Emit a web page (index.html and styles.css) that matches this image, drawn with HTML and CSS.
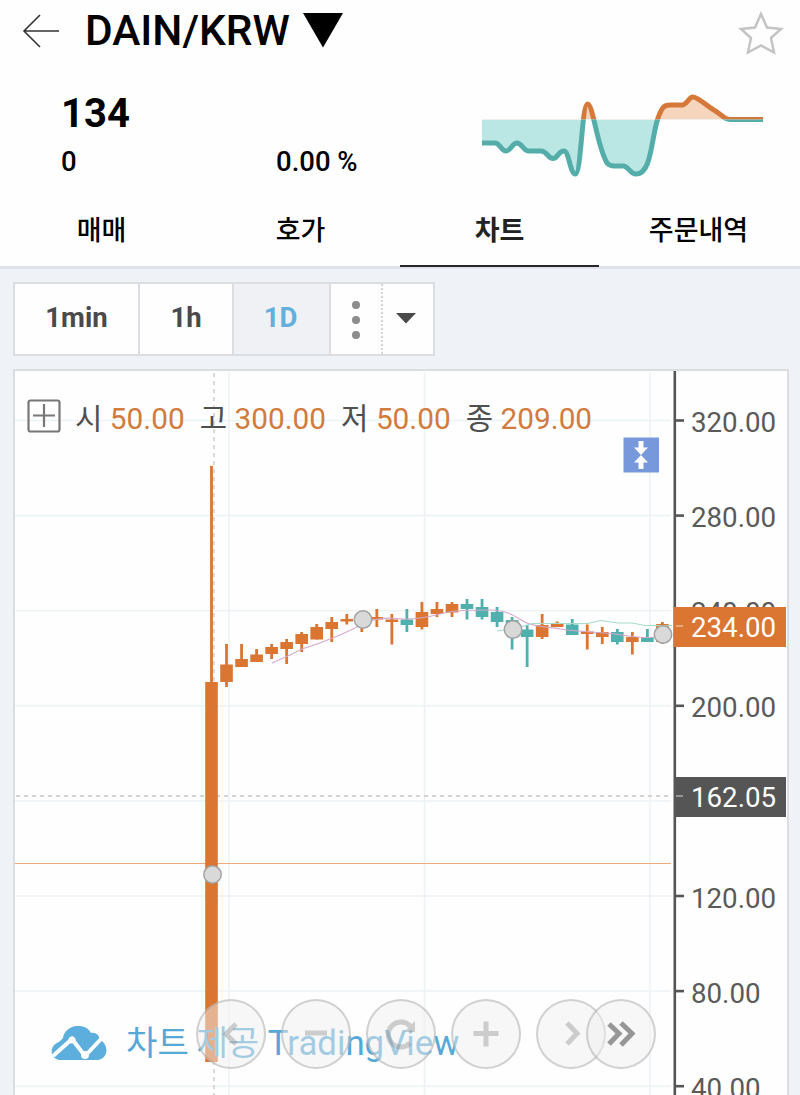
FILE: index.html
```html
<!DOCTYPE html>
<html lang="ko">
<head>
    <meta charset="UTF-8">
    <meta name="viewport" content="width=device-width, initial-scale=1.0">
    <title>DAIN/KRW</title>
    <link rel="stylesheet" href="styles.css">
</head>
<body>
    <header class="top">
        <div class="title-bar">
            <svg class="back" width="38" height="36" viewBox="0 0 38 36"><path d="M18 2L2 18L18 34M2 18H37"/></svg>
            <h1>DAIN/KRW</h1>
            <svg class="caret" width="40" height="35" viewBox="0 0 40 35"><path d="M0 0H40L20 34.5Z"/></svg>
            <svg class="star" width="46" height="44" viewBox="0 0 46 44"><path d="M23 3L29 16.5L43 18L33 27L36 41.5L23 34.5L10 41.5L13 27L3 18L17 16.5Z"/></svg>
        </div>
        <div class="summary">
            <div class="quote">
                <div class="price">134</div>
                <div class="change">
                    <span class="diff">0</span>
                    <span>0.00 %</span>
                </div>
            </div>
            <svg class="spark" width="282" height="90" viewBox="482 90 282 90">
                <defs>
                    <clipPath id="up"><rect x="482" y="90" width="282" height="29.5"/></clipPath>
                    <clipPath id="down"><rect x="482" y="119.5" width="282" height="61"/></clipPath>
                    <path id="line" d="M482 143H495C500 143 501 151 506 151S512 143 517 143S523 151 529 151H541C547 151 548 158.5 553 158.5S558 151 564 151C569 151 570 174 575.5 174C581 174 582 104 587.5 104C593 104 597 146 607 163C609 165 612 166 614 166H624C629 167 630 174 636 174C652 174 651 138 658 118C662 107 664 105 670 105H683C688 103 689 97 693 97C698 97 705 105 717 112L725 118C727 119 728 119.5 730 119.5H763"/>
                    <path id="area" d="M482 119.500V143H495C500 143 501 151 506 151S512 143 517 143S523 151 529 151H541C547 151 548 158.500 553 158.500S558 151 564 151C569 151 570 174 575.500 174C581 174 582 104 587.500 104C593 104 597 146 607 163C609 165 612 166 614 166H624C629 167 630 174 636 174C652 174 651 138 658 118C662 107 664 105 670 105H683C688 103 689 97 693 97C698 97 705 105 717 112L725 118C727 119 728 119.500 730 119.500Z"/>
                </defs>
                <g class="spark-up" clip-path="url(#up)"><use href="#area"/><use class="stroke" href="#line"/></g>
                <g class="spark-down" clip-path="url(#down)"><use href="#area"/><use class="stroke" href="#line"/></g>
            </svg>
        </div>
        <nav class="tabs">
            <a>매매</a>
            <a>호가</a>
            <a class="active">차트</a>
            <a>주문내역</a>
        </nav>
    </header>

    <main>
        <div class="toolbar">
            <button class="min">1min</button>
            <button class="hour">1h</button>
            <button class="day selected">1D</button>
            <button class="more"><i></i><i></i><i></i></button>
            <button class="drop"><svg width="20" height="11" viewBox="0 0 20 11"><path d="M0 0H20L10 10.500Z"/></svg></button>
        </div>

        <section class="chart">
            <svg id="plot" width="772" height="724" viewBox="15 371 772 724">
                <g id="grid"></g>
                <path class="cross" d="M214 373V1095M16 796H671"/>
                <rect class="last" x="15" y="863" width="656" height="1"/>
                <g id="candles"></g>
                <path class="ma" d="M272 663L290 655L302 649L320 643L340 635L353 629C370 620 380 617 395 618.500S425 618 440 614S470 610 490 610S518 619 527 623S550 627 560 629S600 632 615 634S645 639 655 637"/>
                <path class="ma2" d="M497 631L514 629L532 623.500H588L601 620.500L618 623H632L645 625.500H672"/>
                <g class="marks">
                    <circle cx="212.500" cy="874.500" r="8.700"/>
                    <circle cx="363" cy="619.500" r="8.700"/>
                    <circle cx="513" cy="629.500" r="8.700"/>
                    <circle cx="663" cy="634.500" r="8.700"/>
                </g>
                <rect class="axis-bg" x="674" y="371" width="113" height="724"/>
                <path class="axis" d="M674.800 371V1095"/>
                <g id="axis"></g>
                <rect class="tag-now" x="673.500" y="607" width="112.500" height="40"/>
                <path class="tag-tick" d="M676 626H683"/>
                <text class="tag" x="691" y="637">234.00</text>
                <rect class="tag-cross" x="674" y="777" width="112" height="40"/>
                <path class="tag-tick" d="M676 796H683"/>
                <text class="tag" x="691" y="807">162.05</text>
                <g class="fit">
                    <rect x="623.500" y="437.500" width="35.500" height="35"/>
                    <path d="M638.500 441H643.500V447.500H648L641 455L634 447.500H638.500ZM638.500 469H643.500V462.500H648L641 455L634 462.500H638.500Z"/>
                </g>
            </svg>

            <div class="legend">
                <svg width="34" height="34" viewBox="0 0 34 34"><rect x="1.500" y="1.500" width="31" height="31" rx="2"/><path d="M17 5V28M6 16.500H28"/></svg>
                <span>시 <b>50.00</b></span>
                <span>고 <b>300.00</b></span>
                <span>저 <b>50.00</b></span>
                <span>종 <b>209.00</b></span>
            </div>

            <div class="credit">
                <svg width="56" height="35" viewBox="0 0 56 35">
                    <path class="cloud" d="M10 34C-1 34-3 20 8 16C10 14 11 13 12 12C14 -2 35 -4 40 7C45 6 48 9 49 14C58 18 58 33 46 34Z"/>
                    <path class="zig" d="M2 30L21 13L34 30L50 13"/>
                    <circle cx="21" cy="14" r="3.500"/><circle cx="34" cy="29" r="4"/>
                </svg>
                <span>차트 제공 <em>TradingView</em></span>
            </div>

            <div class="controls">
                <button class="prev"><svg viewBox="0 0 70 70"><path d="M40 25L30 35L40 45"/></svg></button>
                <button class="out"><svg viewBox="0 0 70 70"><path d="M24 34H46"/></svg></button>
                <button class="reset"><svg viewBox="0 0 70 70"><path d="M44 27A12.500 12.500 0 1 0 44 44"/><path class="solid" d="M49 22V33H38Z"/></svg></button>
                <button class="in"><svg viewBox="0 0 70 70"><path d="M35 22.500V47.500M22.500 34.500H47.500"/></svg></button>
                <button class="next"><svg viewBox="0 0 70 70"><path d="M31 24L41 34.500L31 45"/></svg></button>
                <button class="end"><svg viewBox="0 0 70 70"><path d="M23 25L33 34.500L23 45M35 24L46 34.500L35 46"/></svg></button>
            </div>
        </section>
    </main>

    <script src="chart.js"></script>
</body>
</html>
```
FILE: styles.css
```css
* {
    box-sizing: border-box;
}

body {
    margin: 0;
    height: 1095px;
    overflow: hidden;
    background: #eff2f7;
    color: #000;
    font-family: Roboto, "Noto Sans CJK KR", sans-serif;
}

svg {
    display: block;
    flex: none;
}

button {
    margin: 0;
    padding: 0;
    border: none;
    background: none;
    font-family: inherit;
}

.top {
    height: 269px;
    background: #fefefe;
    border-bottom: 3px solid #e0e4ea;
}

.title-bar {
    display: flex;
    height: 82px;
    padding: 13px 16px 0 22px;
}

.back {
    fill: none;
    stroke: #333;
    stroke-width: 1.6;
}

h1 {
    margin: -7px 0 0 25px;
    width: 218px;
    font-size: 42.4px;
    line-height: 49px;
    font-weight: 500;
    white-space: nowrap;
}

.star {
    margin: -2px 0 0 auto;
    fill: none;
    stroke: #c4c4c4;
    stroke-width: 2.5;
}

.summary {
    display: flex;
    height: 112px;
    padding: 8px 36px 0 61px;
    justify-content: space-between;
}

.price {
    padding-top: 1px;
    font-size: 40px;
    line-height: 46px;
    font-weight: 700;
}

.change {
    display: flex;
    margin-top: 8px;
    font-size: 27.5px;
    line-height: 34px;
    font-weight: 500;
}

.diff {
    width: 215px;
}

.spark-up {
    fill: #f6d5bd;
}

.spark-down {
    fill: #bae6e3;
}

.stroke {
    fill: none;
    stroke-width: 5;
}

.spark-up .stroke {
    stroke: #d6783a;
}

.spark-down .stroke {
    stroke: #55adaa;
}

.tabs {
    display: flex;
    height: 73px;
    padding: 0 2px;
}

.tabs a {
    width: 199px;
    padding-top: 17px;
    font-size: 27px;
    line-height: 40px;
    font-weight: 500;
    text-align: center;
}

.tabs .active {
    color: #222;
    border-bottom: 2px solid #26262c;
    font-weight: 700;
}

main {
    padding: 13px 12px 0 13px;
}

.toolbar {
    display: flex;
    width: 422px;
    height: 74px;
    border: 2px solid #dbdde0;
    background: #fefefe;
}

.toolbar button {
    display: flex;
    align-items: center;
    justify-content: center;
    padding-bottom: 4px;
    border-right: 2px solid #dbdde0;
    color: #4a4a4a;
    font-size: 27.5px;
    font-weight: 700;
}

.min {
    width: 125px;
}

.hour {
    width: 94px;
}

.day {
    width: 97px;
}

.toolbar .selected {
    padding-right: 2px;
    background: #f0f1f4;
    color: #64b0dc;
}

.toolbar .more {
    width: 52px;
    padding: 2px 0 0;
    flex-direction: column;
    gap: 7px;
    border-right: 2px dotted #d5d5d5;
}

.more i {
    width: 8px;
    height: 8px;
    border-radius: 50%;
    background: #8c8c8c;
}

.toolbar .drop {
    width: 50px;
    padding: 0 5px 1px 0;
    border: none;
    fill: #4a4a4a;
}

.chart {
    position: relative;
    width: 776px;
    height: 740px;
    margin-top: 13px;
    border: 2px solid #dbdde0;
    background: #fefefe;
}

.grid {
    stroke: #edf2f5;
    stroke-width: 1.5;
}

.cross {
    fill: none;
    stroke: #c6c6c6;
    stroke-width: 1.3;
    stroke-dasharray: 4 4;
}

.last {
    fill: #eeab7e;
}

.up {
    fill: #da7532;
}

.down {
    fill: #50b0ad;
}

.ma, .ma2 {
    fill: none;
    stroke: #d5a9cd;
    stroke-width: 1.1;
}

.ma2 {
    stroke: #a6dccb;
}

.marks circle {
    fill: #d9d9d9;
    stroke: #a3a3a3;
    stroke-width: 1.5;
}

.axis-bg {
    fill: #fefefe;
}

.axis {
    stroke: #555;
    stroke-width: 2.6;
}

.label, .tag {
    fill: #5a5a5a;
    font-size: 27.7px;
}

.tag {
    fill: #fff;
}

.tag-now {
    fill: #da7532;
}

.tag-cross {
    fill: #555;
}

.tag-tick {
    stroke: #fff;
    stroke-opacity: .5;
    stroke-width: 1.5;
}

.fit {
    fill: #fff;
}

.fit rect {
    fill: #7799dc;
}

/* open / high / low / close */
.legend {
    position: absolute;
    top: 28px;
    left: 12px;
    display: flex;
    color: #4f4f4f;
    font-size: 29.8px;
    line-height: 40px;
    white-space: nowrap;
}

.legend svg {
    margin: 0 14px 0 0;
    fill: none;
    stroke: #777;
    stroke-width: 2.2;
}

.legend span {
    margin-right: 15px;
}

.legend b {
    color: #d17b3e;
    font-weight: 400;
}

.credit {
    position: absolute;
    top: 647px;
    left: 36px;
    display: flex;
    align-items: center;
    gap: 19px;
    color: #56a9d6;
    font-size: 34.2px;
    line-height: 50px;
    word-spacing: -1px;
    white-space: nowrap;
}

.credit svg {
    fill: #fff;
}

.credit em {
    margin-left: 1px;
    font-size: 34.8px;
    font-style: normal;
}

.cloud {
    fill: #5caedd;
}

.zig {
    fill: none;
    stroke: #fff;
    stroke-width: 4;
}

.controls {
    position: absolute;
    top: 628px;
    left: 181px;
    display: flex;
    gap: 15px;
}

.controls button {
    width: 70px;
    height: 70px;
    border: 2px solid rgba(150, 150, 150, .4);
    border-radius: 50%;
    background: rgba(240, 240, 240, .5);
}

.controls svg {
    margin: -2px;
    width: 70px;
    height: 70px;
    fill: none;
    stroke: rgba(140, 140, 140, .4);
    stroke-width: 5;
}

.controls .solid {
    fill: rgba(140, 140, 140, .4);
    stroke: none;
}

.controls .end {
    margin-left: -35px;
}

.controls .end svg {
    stroke: #969696;
}
```
FILE: chart.js
```js
// [direction, high, body top, body bottom, low]
const candles = [
    ['up', 466, 682, 1062, 1062],
    ['up', 644, 664.5, 682, 687],
    ['up', 644, 659, 667, 667],
    ['up', 649, 654.5, 662, 662],
    ['up', 644, 647, 654, 659],
    ['up', 639, 642, 649, 664],
    ['up', 632, 634, 644, 652],
    ['up', 624, 627, 639.5, 639.5],
    ['up', 617, 622, 629, 642],
    ['up', 614, 619, 621.5, 624.5],
    ['up', 614, 617, 623, 632],
    ['up', 609, 617, 619.5, 627],
    ['up', 614, 619.5, 622, 644.5],
    ['down', 609, 619.5, 625, 632],
    ['up', 602, 612, 627, 629.5],
    ['up', 602, 609, 614, 617],
    ['up', 602, 604, 612.5, 617],
    ['down', 599, 604, 609, 619.5],
    ['down', 599, 607, 617, 619.5],
    ['down', 607, 612, 622, 627],
    ['down', 617, 620, 632, 649.5],
    ['down', 625, 629.5, 637, 667],
    ['up', 614, 625, 637, 639],
    ['up', 621.5, 624, 627, 627],
    ['down', 619, 624.5, 635, 635],
    ['up', 624.5, 631.5, 634, 649.5],
    ['up', 627, 632, 637, 644],
    ['down', 629, 632, 642, 644.5],
    ['up', 632, 637, 642, 654.5],
    ['down', 629, 637, 642, 642],
    ['up', 622, 624, 642, 644]
];

const labels = ['320.00', '280.00', '240.00', '200.00', '', '120.00', '80.00', '40.00'];

let grid = '';
let axis = '';
labels.forEach((text, i) => {
    const y = 420.5 + i * 95.1;
    grid += `<path class="grid" d="M15 ${y}H671"/>`;
    if (text) {
        axis += `<path class="axis" d="M676 ${y}H684"/><text class="label" x="691" y="${y + 11.5}">${text}</text>`;
    }
});
[229, 424.5, 650].forEach(x => {
    grid += `<path class="grid" d="M${x} 372V1095"/>`;
});
document.getElementById('grid').innerHTML = grid;
document.getElementById('axis').innerHTML = axis;

document.getElementById('candles').innerHTML = candles.map(([dir, high, top, bottom, low], i) => {
    const x = 211.5 + i * 15.03;
    return `<g class="${dir}"><rect x="${x - 1.4}" y="${high}" width="2.8" height="${low - high}"/>` +
        `<rect x="${x - 6.3}" y="${top}" width="12.6" height="${bottom - top}"/></g>`;
}).join('');
```
